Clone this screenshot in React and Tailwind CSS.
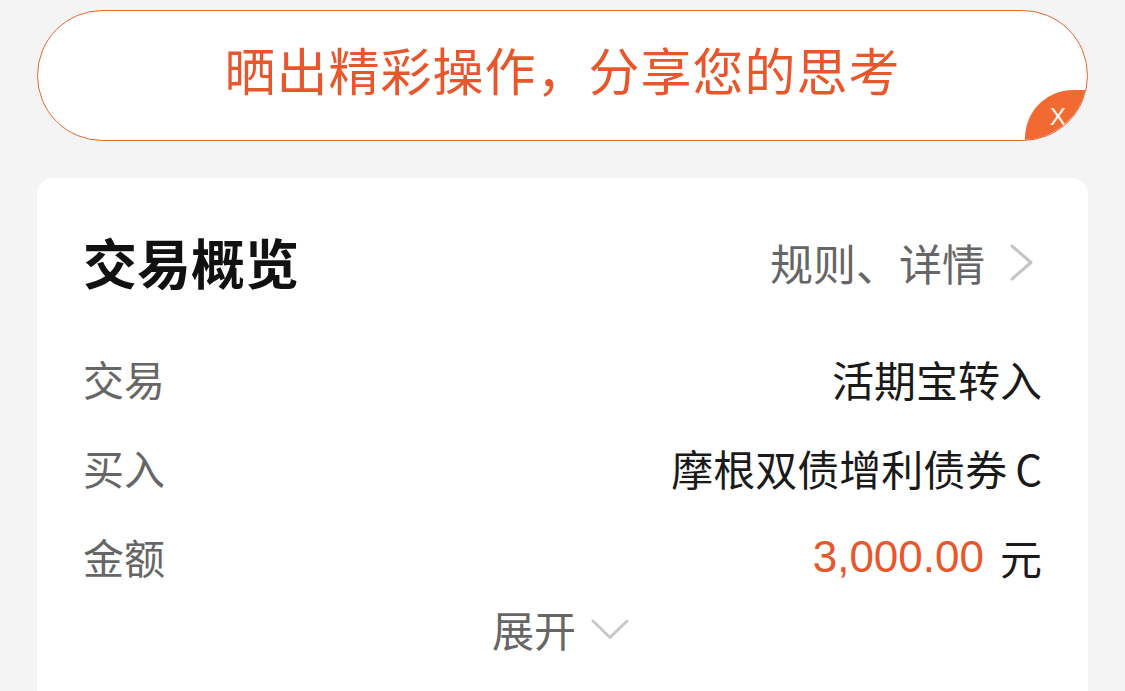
function Row({ label, children }) {
  return (
    <div className="flex h-[89px] items-center justify-between">
      <span className="text-[41px] text-[#666666]">{label}</span>
      <span className="flex items-center text-[42px] text-[#1a1a1a]">{children}</span>
    </div>
  )
}

export default function App() {
  return (
    <div className="flex h-[691px] w-[1125px] flex-col overflow-hidden bg-[#f4f4f4] px-[37px] pt-[10px] [font-family:'Noto_Sans_CJK_SC','Noto_Sans',sans-serif]">
      {/* share banner */}
      <div className="relative flex h-[131px] shrink-0 items-center justify-center overflow-hidden rounded-full border-[1.5px] border-[#e8642e] bg-white pb-[12px]">
        <span className="text-[51px] leading-none tracking-[1px] text-[#e8572b]">晒出精彩操作，分享您的思考</span>
        <div className="absolute bottom-0 right-0 flex h-[50px] w-[62px] items-center justify-center rounded-tl-[48px] bg-[#f26a32] pl-[4px] pt-[4px]">
          <span className="text-[24px] leading-none text-white [font-family:'Liberation_Sans',sans-serif]">X</span>
        </div>
      </div>

      {/* overview card */}
      <div className="mt-[37px] flex-1 rounded-t-[16px] bg-white px-[46px] pt-[54px]">
        <div className="flex h-[60px] items-center justify-between">
          <h1 className="text-[54px] font-bold leading-none text-[#111111]">交易概览</h1>
          <div className="flex items-center gap-[24px] pr-[8px]">
            <span className="text-[43px] leading-none text-[#666666]">规则、详情</span>
            <svg width="25" height="37" viewBox="0 0 25 37" fill="none" stroke="#c4c4c4" strokeWidth="3" strokeLinecap="round" strokeLinejoin="round">
              <polyline points="3,2 22,18.5 3,35" />
            </svg>
          </div>
        </div>

        <div className="mt-[42px]">
          <Row label="交易">活期宝转入</Row>
          <Row label="买入">
            摩根双债增利债券<span className="ml-[8px]">C</span>
          </Row>
          <Row label="金额">
            <span className="text-[#e8572b] [font-family:'Liberation_Sans',sans-serif] text-[44px]">3,000.00</span>
            <span className="ml-[16px]">元</span>
          </Row>
        </div>

        <div className="flex h-[56px] items-center justify-center gap-[15px] pr-[4px]">
          <span className="text-[42px] leading-none text-[#666666]">展开</span>
          <svg width="38" height="21" viewBox="0 0 38 21" fill="none" stroke="#c8c8c8" strokeWidth="3" strokeLinecap="round" strokeLinejoin="round">
            <polyline points="2,2 19,18.5 36,2" />
          </svg>
        </div>
      </div>
    </div>
  )
}
